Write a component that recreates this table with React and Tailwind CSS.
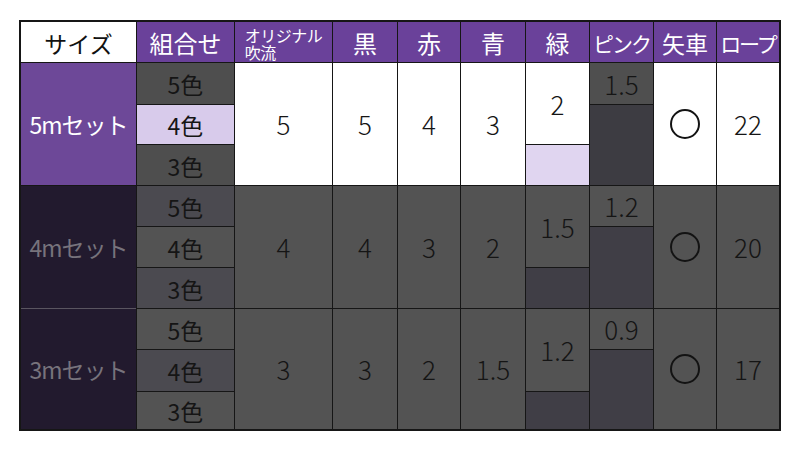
const FONT = { fontFamily: '"Noto Sans CJK JP", "Noto Sans", sans-serif' }

const PURPLE = 'bg-[#6a419a]'
const GRAY = 'bg-[#535353]'
const GRAY_D = 'bg-[#4b4a50]'
const DARK = 'bg-[#403e46]'
const NUM = 'text-[26px] text-[#151515] font-light'
const SUB = 'text-[23px] text-[#151515] pt-[2px]'

function Cell({ pos, bg, className = '', children }) {
  return (
    <div className={`${pos} ${bg} flex items-center justify-center leading-none ${className}`}>
      {children}
    </div>
  )
}

function Ring() {
  return <div className="w-[30px] h-[30px] rounded-full border-2 border-[#131313]" />
}

export default function App() {
  return (
    <div className="w-[800px] h-[451px] bg-white pl-[19px] pt-[20px]" style={FONT}>
      <div className="w-[762px] grid gap-px p-[2px] bg-[#161616] grid-cols-[115px_97px_97px_64px_62px_64px_63px_63px_62px_62px] grid-rows-[40px_41px_39px_40px_40px_40px_40px_40px_41px_37px]">
        {/* header */}
        <Cell pos="col-start-1 row-start-1" bg="bg-white" className="text-[23px] text-[#111] pt-[2px]">サイズ</Cell>
        <Cell pos="col-start-2 row-start-1" bg={PURPLE} className="text-[24px] text-white pt-[2px]">組合せ</Cell>
        <Cell pos="col-start-3 row-start-1" bg={PURPLE} className="text-white">
          <div className="text-[16px] leading-[17px] tracking-[-0.5px] pt-[3px]">
            オリジナル<br />吹流
          </div>
        </Cell>
        <Cell pos="col-start-4 row-start-1" bg={PURPLE} className="text-[24px] text-white pt-[2px]">黒</Cell>
        <Cell pos="col-start-5 row-start-1" bg={PURPLE} className="text-[24px] text-white pt-[2px]">赤</Cell>
        <Cell pos="col-start-6 row-start-1" bg={PURPLE} className="text-[24px] text-white pt-[2px]">青</Cell>
        <Cell pos="col-start-7 row-start-1" bg={PURPLE} className="text-[24px] text-white pt-[2px]">緑</Cell>
        <Cell pos="col-start-8 row-start-1" bg={PURPLE} className="text-[21px] tracking-[-2px] text-white pt-[2px]">ピンク</Cell>
        <Cell pos="col-start-9 row-start-1" bg={PURPLE} className="text-[23px] text-white pt-[2px]">矢車</Cell>
        <Cell pos="col-start-10 row-start-1" bg={PURPLE} className="text-[21px] tracking-[-2px] text-white pt-[2px]">ロープ</Cell>

        {/* 5m */}
        <Cell pos="col-start-1 row-start-2 row-span-3" bg="bg-[#6d4898]" className="text-[23px] tracking-[-1px] text-white">5mセット</Cell>
        <Cell pos="col-start-2 row-start-2" bg="bg-[#4e4e4e]" className={SUB}>5色</Cell>
        <Cell pos="col-start-2 row-start-3" bg="bg-[#d8cbeb]" className={SUB}>4色</Cell>
        <Cell pos="col-start-2 row-start-4" bg="bg-[#4e4e4e]" className={SUB}>3色</Cell>
        <Cell pos="col-start-3 row-start-2 row-span-3" bg="bg-white" className={NUM}>5</Cell>
        <Cell pos="col-start-4 row-start-2 row-span-3" bg="bg-white" className={NUM}>5</Cell>
        <Cell pos="col-start-5 row-start-2 row-span-3" bg="bg-white" className={NUM}>4</Cell>
        <Cell pos="col-start-6 row-start-2 row-span-3" bg="bg-white" className={NUM}>3</Cell>
        <Cell pos="col-start-7 row-start-2 row-span-2" bg="bg-white" className={NUM}>2</Cell>
        <Cell pos="col-start-7 row-start-4" bg="bg-[#e0d5f0]" />
        <Cell pos="col-start-8 row-start-2" bg="bg-[#4f4f4f]" className={NUM}>1.5</Cell>
        <Cell pos="col-start-8 row-start-3 row-span-2" bg="bg-[#3d3c42]" />
        <Cell pos="col-start-9 row-start-2 row-span-3" bg="bg-white"><Ring /></Cell>
        <Cell pos="col-start-10 row-start-2 row-span-3" bg="bg-white" className={NUM}>22</Cell>

        {/* 4m */}
        <Cell pos="col-start-1 row-start-5 row-span-3" bg="bg-[#221a2e]" className="text-[23px] tracking-[-1px] text-[#77737c]">4mセット</Cell>
        <Cell pos="col-start-2 row-start-5" bg={GRAY_D} className={SUB}>5色</Cell>
        <Cell pos="col-start-2 row-start-6" bg={GRAY} className={SUB}>4色</Cell>
        <Cell pos="col-start-2 row-start-7" bg={GRAY_D} className={SUB}>3色</Cell>
        <Cell pos="col-start-3 row-start-5 row-span-3" bg={GRAY} className={NUM}>4</Cell>
        <Cell pos="col-start-4 row-start-5 row-span-3" bg={GRAY} className={NUM}>4</Cell>
        <Cell pos="col-start-5 row-start-5 row-span-3" bg={GRAY} className={NUM}>3</Cell>
        <Cell pos="col-start-6 row-start-5 row-span-3" bg={GRAY} className={NUM}>2</Cell>
        <Cell pos="col-start-7 row-start-5 row-span-2" bg={GRAY} className={NUM}>1.5</Cell>
        <Cell pos="col-start-7 row-start-7" bg={DARK} />
        <Cell pos="col-start-8 row-start-5" bg={GRAY} className={NUM}>1.2</Cell>
        <Cell pos="col-start-8 row-start-6 row-span-2" bg={DARK} />
        <Cell pos="col-start-9 row-start-5 row-span-3" bg={GRAY}><Ring /></Cell>
        <Cell pos="col-start-10 row-start-5 row-span-3" bg={GRAY} className={NUM}>20</Cell>

        {/* 3m */}
        <Cell pos="col-start-1 row-start-8 row-span-3" bg="bg-[#221a2e]" className="text-[23px] tracking-[-1px] text-[#77737c] -mt-px border-t border-[#5a5560]">3mセット</Cell>
        <Cell pos="col-start-2 row-start-8" bg={GRAY} className={SUB}>5色</Cell>
        <Cell pos="col-start-2 row-start-9" bg={GRAY_D} className={SUB}>4色</Cell>
        <Cell pos="col-start-2 row-start-10" bg={GRAY} className={SUB}>3色</Cell>
        <Cell pos="col-start-3 row-start-8 row-span-3" bg={GRAY} className={NUM}>3</Cell>
        <Cell pos="col-start-4 row-start-8 row-span-3" bg={GRAY} className={NUM}>3</Cell>
        <Cell pos="col-start-5 row-start-8 row-span-3" bg={GRAY} className={NUM}>2</Cell>
        <Cell pos="col-start-6 row-start-8 row-span-3" bg={GRAY} className={NUM}>1.5</Cell>
        <Cell pos="col-start-7 row-start-8 row-span-2" bg={GRAY} className={NUM}>1.2</Cell>
        <Cell pos="col-start-7 row-start-10" bg={DARK} />
        <Cell pos="col-start-8 row-start-8" bg={GRAY} className={NUM}>0.9</Cell>
        <Cell pos="col-start-8 row-start-9 row-span-2" bg={DARK} />
        <Cell pos="col-start-9 row-start-8 row-span-3" bg={GRAY}><Ring /></Cell>
        <Cell pos="col-start-10 row-start-8 row-span-3" bg={GRAY} className={NUM}>17</Cell>
      </div>
    </div>
  )
}
